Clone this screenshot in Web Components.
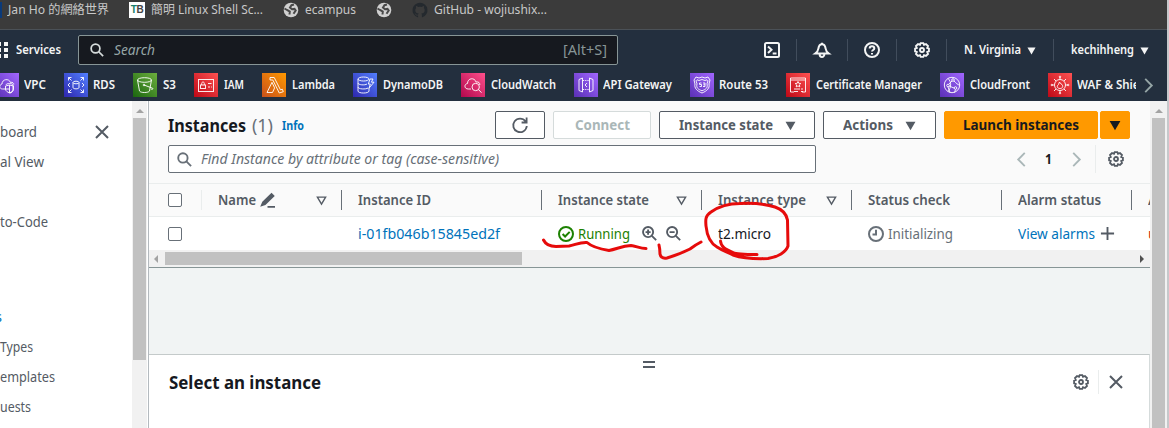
<!DOCTYPE html>
<html lang="en"><head><meta charset="utf-8"><title>Instances</title>
<style>html,body{margin:0;height:100%;overflow:hidden}</style></head>
<body><ec2-console></ec2-console>
<script>
// Base class: every element renders a template string into an open shadow root.
class Base extends HTMLElement{
  connectedCallback(){ if(this.shadowRoot) return; this.attachShadow({mode:'open'}).innerHTML='<style>*{box-sizing:border-box}svg{display:block}'+this.css()+'</style>'+this.html(); this.ready(); }
  css(){return ''} html(){return '<slot></slot>'} ready(){}
  a(n,d=''){return this.getAttribute(n)??d}
}
// Text run condensed or widened to a set advance width.
customElements.define('fit-text',class extends Base{
  css(){return `:host{display:inline-block;flex:none;white-space:pre;width:${this.a('w')}px;line-height:20px}span{display:inline-block;transform-origin:0 50%}`}
  html(){return '<span><slot></slot></span>'}
  ready(){const s=this.shadowRoot.querySelector('span');const w=s.getBoundingClientRect().width;if(w)s.style.transform=`scaleX(${+this.a('w')/w})`}
});
const gear='<path d="M6.7 1.1h2.6l.7 1.7 2-.8 2 2-.8 2 1.7.7v2.6l-1.7.7.8 2-2 2-2-.8-.7 1.7H6.7L6 13.2l-2 .8-2-2 .8-2-1.7-.7V6.7L2.8 6 2 4l2-2 2 .8z"/><circle cx="8" cy="8" r="2"/>';
const glyphs={
 gear,
 search:'<circle cx="6.3" cy="6.3" r="5"/><path d="m10 10 5 5"/>',
 bell:'<path d="M8 .8V3M1.2 11.5h13.6c-2-1.5-3-3-3.2-5C11.2 3.5 10 2.2 8 2.2S4.800 3.500 4.400 6.500c-.2 2-1.200 3.500-3.200 5zM5.600 11.700c0 4.400 4.800 4.400 4.800 0"/>',
 help:'<circle cx="8" cy="8" r="7"/><path d="M5.7 6.4c0-3 4.6-3 4.6 0 0 1.6-2.3 1.6-2.3 3.2M8 11v1.5"/>',
 shell:'<rect x="1" y="1" width="14" height="14" rx="1.5"/><path d="m4 4.5 3.5 3.3L4 11M8.7 11.5h3.8"/>',
 close:'<path d="m2 2 12 12M14 2 2 14"/>',
 refresh:'<path d="M13.5 4.3A6.8 6.8 0 1 0 14.8 9M14.6.5v5h-5"/>',
 left:'<path d="M11.5 1 4.5 8l7 7"/>', right:'<path d="m4.5 1 7 7-7 7"/>',
 down:'<path d="M.8 2.500h14.400L8 15z" fill="currentColor" stroke-width="0"/>',
 sort:'<path d="M2 3h12L8 13.2z"/>',
 edit:'<path d="m2 13 1.3-3.2L12.3 1.2 14.3 3.2 5.3 11.8zM3.500 11.500 13 2.500M8 14.8h8"/>',
 check:'<circle cx="8" cy="8" r="7"/><path d="m4.6 8 2.5 2.5 4.6-4.6"/>',
 clock:'<circle cx="8" cy="8" r="7"/><path d="M8 3.8V8.500H4.5"/>',
 zin:'<circle cx="6.5" cy="6.5" r="5.4"/><path d="m10.5 10.5 4.6 4.6M3.8 6.5h5.4M6.5 3.8v5.4"/>',
 zout:'<circle cx="6.5" cy="6.5" r="5.4"/><path d="m10.5 10.5 4.6 4.6M3.8 6.5h5.4"/>',
 plus:'<path d="M8 1v14M1 8h14"/>',
 apps:'<path d="M0 0h1v4H0zM4 0h4v4H4zM0 6h1v4H0zM4 6h4v4H4zM0 12h1v4H0zM4 12h4v4H4z" fill="currentColor" stroke="none"/>',
 globe:'<circle cx="8" cy="8" r="7.300" fill="#d0d0d0" stroke="none"/><path d="M11 2.500 8.500 3.200 7 5.500l2 1.700 2.500-.3 1.200 1.600-2.200 3.300M1.500 6.500 4 8l2.800 1.500L6.500 12.500" stroke="#484848" stroke-width="2"/>',
 git:'<path d="M8 .7a7.5 7.5 0 0 0-2.4 14.6c.4 0 .5-.2.5-.4v-1.4c-2.1.4-2.7-1-2.9-1.5l-.7-.8c1 0 1.4 1.1 1.9 1.4.6.4 1.3.2 1.7 0 .1-.5.4-.8.6-1-1.9-.2-3.4-1-3.4-3.6 0-.8.3-1.5.8-2-.1-.5-.2-1.200.1-2 0 0 .8 0 2 .9a7 7 0 0 1 3.6 0c1.200-.9 2-.9 2-.9.3.8.2 1.500.1 2 .5.5.8 1.200.8 2 0 2.600-1.600 3.400-3.400 3.600.3.3.6.8.6 1.600v1.700c0 .2.1.4.5.4A7.500 7.500 0 0 0 8 .7z" fill="#24292e" stroke="none"/>'
};
customElements.define('ui-icon',class extends Base{
  css(){return `:host{display:block;flex:none;width:${this.a('s','16')}px;height:${this.a('h',this.a('s','16'))}px}svg{width:100%;height:100%;overflow:visible}`}
  html(){return `<svg viewBox="0 0 ${this.a('n')=='apps'?8:16} 16" fill="none" stroke="currentColor" stroke-width="${this.a('k','2')}">${glyphs[this.a('n')]}</svg>`}
});
// Shortcut tiles: gradient pair and line drawing per service.
const P=['#5a30b5','#a166ff'],B=['#2e27ad','#527fff'],R=['#bd0816','#ff5252'];
const tiles={
 vpc:[P,'<path d="M14 16H7.5C4 16 4 11.5 7 11c0-5 7-6 8.5-1.5 2-.8 3.5.8 3.3 2"/><path d="m11 12c0-2 7-2 7 0v5c0 1.500-1.500 3-3 3"/><path d="m10.500 13 4-1 4 1v3c0 2-2 3-4 4-2-1-4-2-4-4zM14.500 12v8"/>'],
 rds:[B,'<ellipse cx="12" cy="9.500" rx="3" ry="1.300"/><path d="M9 9.500v5c0 1.800 6 1.800 6 0v-5M4.500 7.500v-3h3M4.500 4.500 7.500 7.500M16.500 4.500h3v3M19.500 4.500l-3 3M4.500 16.500v3h3M4.500 19.500l3-3m9 3h3v-3m0 3-3-3M6 10l-2 2 2 2m12-4 2 2-2 2"/>'],
 s3:[['#1b660f','#6cae3e'],'<ellipse cx="11.5" cy="7" rx="7" ry="2.3"/><path d="m4.5 7 2 11c1 2 9 2 10 0l2-11M11 12l8 3c2 .5.5 2-1 1"/><circle cx="11" cy="12" r=".8"/>'],
 iam:[R,'<rect x="4.500" y="6.500" width="15" height="12"/><rect x="6.5" y="12" width="5" height="3.500"/><path d="M7.7 12v-1.500c0-2 2.6-2 2.6 0V12M14 10.500h3.500M14 14h2M17 14h.8"/>'],
 lambda:[['#c8511b','#f90'],'<path d="M5 19.5 10 9.3l2.6 5.6-2.1 4.6zM8 4.5h4.2l6.3 12.4 1.8-.7 1 2.5-4 1.3L10.8 7H8z"/>'],
 dynamo:[B,'<ellipse cx="10.5" cy="6" rx="5.5" ry="2"/><path d="M5 6v12c0 2.7 11 2.7 11 0v-3M5 10c0 2 7 2.5 9 1M5 14c0 2.3 8 2.5 10 1M17 6h3l-1.6 3.2H21l-5 6 1.3-4.2h-2z"/>'],
 watch:[['#b0084d','#ff4f8b'],'<path d="M10 16H7.3C3 16 3 11 6.5 10.5 6.5 5 13.5 4 15 9c2.8-.5 4 1 3.8 3"/><circle cx="14.7" cy="14" r="3.7"/><path d="m17.5 16.5 3 3.2"/>'],
 api:[P,'<path d="M8.500 5v14L5 17.500v-11zM15.500 5v14l3.500-1.500v-11zM13 10l-2 2 2 2"/><path d="M9 7.500h6M9 16.500h6" stroke-dasharray="1.2 1"/>'],
 route:[P,'<path d="M12 4l3 1 3-1 2 3-1 4c1 4-2 7-7 9-5-2-8-5-7-9L4 7l2-3 3 1zM12 6.5l3 1 2-.7 1 1-1 3c1 4-1 5.500-5 7-4-1.500-6-3-5-7l-1-3 1-1 2 .7z"/><path d="M11.500 10H9.500v1.500h2v2h-2M13 10h2v3.500h-2m.3-1.700H15"/>'],
 cert:[R,'<path d="M8 19H4.5V5h15v14H16M5 7h14M8 16h6m-6 2.5h4M15 16h2m-2 2.5h2M12 8.5l.8 1.8 2 .2-1.4 1.4.4 2-1.8-1-1.8 1 .4-2-1.4-1.4 2-.2z"/>'],
 front:[P,'<circle cx="12" cy="12" r="7.7"/><circle cx="13" cy="7" r="1.3"/><circle cx="8" cy="12.5" r="1.3"/><circle cx="15.5" cy="15" r="1.3"/><path d="M8 5.5C12 9 11 15 8 18.5M14 8c2 2 4 4 5.5 4M9 11l3-3m-3 5 5 2m-6-1 2 5.5m5.5-3-1 3"/>'],
 waf:[R,'<circle cx="12" cy="12" r="5.500"/><path d="M12 4v2.500m0 11V20M4 12h2.500m11 0H20M6 6l2 2m8 8 2 2m0-12-2 2m-8 8-2 2M12 15.5c-3 0-3.5-2.5-1.5-4l1-2.5 1 1.5 1.5 1c1.5 2 .5 4-2 4z"/><circle cx="12" cy="3.800" r=".7"/><circle cx="12" cy="20.200" r=".7"/><circle cx="3.800" cy="12" r=".7"/><circle cx="20.200" cy="12" r=".7"/>']
};
customElements.define('service-link',class extends Base{
  css(){const g=tiles[this.a('n')][0];return `:host{display:flex;flex:none;align-items:center;gap:${this.a('g','6')}px}i{width:24px;height:24px;background:linear-gradient(45deg,${g[0]},${g[1]})}fit-text{font:600 12px "Noto Sans",sans-serif;line-height:20px;color:#f4f5f5}`}
  html(){return `<i><svg width="24" height="24" viewBox="0 0 24 24" fill="none" stroke="#fff" stroke-width="1" stroke-opacity=".9">${tiles[this.a('n')][1]}</svg></i><fit-text w="${this.a('w')}">${this.a('t')}</fit-text>`}
});
customElements.define('bookmark-bar',class extends Base{
  css(){return `:host{display:flex;height:30px;background:#3b3b3b;border-bottom:1px solid #4b5157;font:12.5px "Noto Sans","Noto Sans CJK TC",sans-serif;color:#c8c8c8;overflow:hidden}.b{display:flex;align-items:center;height:19px}fit-text{margin-left:6px}.j{width:2px;height:16px;background:#0a3a7a}.tb{width:16px;height:16px;background:#fff;color:#444;font:bold 10px/16px "Liberation Sans";text-align:center;letter-spacing:-.5px}.tb b{color:#17806d}`}
  html(){return `<div class="b"><i class="j"></i><fit-text w="101">Jan Ho 的網絡世界</fit-text></div><div class="b" style="margin-left:20px"><i class="tb"><b>T</b>B</i><fit-text w="112">簡明 Linux Shell Sc...</fit-text></div><div class="b" style="margin-left:20px"><ui-icon n="globe"></ui-icon><fit-text w="51">ecampus</fit-text></div><div class="b" style="margin-left:20px"><ui-icon n="globe"></ui-icon></div><div class="b" style="margin-left:20px"><ui-icon n="git"></ui-icon><fit-text w="113">GitHub - wojiushix...</fit-text></div>`}
});
customElements.define('top-nav',class extends Base{
  css(){return `:host{display:flex;height:40px;align-items:center;background:#232f3e;color:#f4f5f5;font:600 12px "Noto Sans",sans-serif}
   .s{display:flex;align-items:center;width:540px;height:30px;margin-left:17px;padding:0 10px 0 11px;border:1px solid #879596;border-radius:2px;background:#16191f;color:#d5dbdb;font-size:14px;font-weight:400}.s em{margin-left:10px;color:#95a5a6;flex:1}.s fit-text.k{color:#879596}
   .u{display:flex;align-items:center;justify-content:center;height:22px;border-left:1px solid #414d5c}.u:first-child{border:0}`}
  html(){return `<ui-icon n="apps" s="8" h="16"></ui-icon><fit-text w="45" style="margin-left:8px">Services</fit-text>
   <div class="s"><ui-icon n="search" s="14"></ui-icon><em><fit-text w="41">Search</fit-text></em><fit-text class="k" w="44">[Alt+S]</fit-text></div>
   <div style="display:flex;margin-left:130px"><div class="u" style="width:48px"><ui-icon n="shell"></ui-icon></div><div class="u" style="width:51px"><ui-icon n="bell"></ui-icon></div><div class="u" style="width:49px"><ui-icon n="help"></ui-icon></div><div class="u" style="width:50px"><ui-icon n="gear" k="1.9"></ui-icon></div>
   <div class="u" style="width:107px;gap:6px;padding-right:1px"><fit-text w="57">N. Virginia</fit-text><ui-icon n="down" s="9"></ui-icon></div><div class="u" style="width:113px;gap:6px;padding-right:1px"><fit-text w="63">kechihheng</fit-text><ui-icon n="down" s="9"></ui-icon></div></div>`}
});
customElements.define('favorites-bar',class extends Base{
  css(){return `:host{display:flex;height:31px;background:#232f3e;align-items:center;color:#95a5a6;padding-bottom:1px}.l{display:flex;gap:18px;width:1136px;overflow:hidden}service-link:first-child{margin-left:-5px}ui-icon{margin-left:5px}`}
  html(){return '<div class="l">'+[['vpc','VPC',22,5],['rds','RDS',22,5],['s3','S3',13],['iam','IAM',20],['lambda','Lambda',43],['dynamo','DynamoDB',60],['watch','CloudWatch',65,6],['api','API Gateway',69,5],['route','Route 53',49,5],['cert','Certificate Manager',106],['front','CloudFront',60],['waf','WAF &amp; Shield',73,5]].map(x=>`<service-link n="${x[0]}" t="${x[1]}" w="${x[2]}" g="${x[3]||6}"></service-link>`).join('')+'</div><ui-icon n="right" s="15" k="2"></ui-icon>'}
});
// Classic scrollbar, vertical.
customElements.define('v-scroll',class extends Base{
  css(){return `:host{display:flex;flex-direction:column;flex:none;width:15px;align-items:center;background:#f1f1f1}i{width:0;border:4px solid transparent;border-top:0;border-bottom:4px solid #a3a3a3;margin-top:8px}b{width:13px;height:${this.a('h')}px;background:#c1c1c1;margin-top:5px}`}
  html(){return '<i></i><b></b>'}
});
customElements.define('side-nav',class extends Base{
  css(){return `:host{display:flex;flex:none;width:149px;background:#fff;border-right:1px solid #b4babf;color:#545b64;font:14px "Noto Sans",sans-serif}nav{width:132px;overflow:hidden;padding-top:16px}div{height:30px;display:flex;align-items:center}ui-icon{margin-left:57px}.g{height:65px}v-scroll{margin-right:1px}`}
  html(){return `<nav><div><fit-text w="37">board</fit-text><ui-icon n="close"></ui-icon></div><div><fit-text w="44">al View</fit-text></div><div></div><div><fit-text w="48">to-Code</fit-text></div><div class="g"></div><div style="color:#0073bb;margin-left:-5px"><fit-text w="7">s</fit-text></div><div><fit-text w="33">Types</fit-text></div><div><fit-text w="55">emplates</fit-text></div><div><fit-text w="31">uests</fit-text></div></nav><v-scroll h="242"></v-scroll>`}
});
customElements.define('ui-button',class extends Base{
  css(){const v=this.a('v');return `:host{display:flex;flex:none;align-items:center;justify-content:center;gap:12px;width:${this.a('w')}px;height:28px;border:1px solid #545b64;border-radius:2px;background:#fff;color:#545b64;font:bold 14px "Noto Sans",sans-serif}
   ${v=='off'?':host{border-color:#d5dbdb;color:#aab7b8}':''}${v=='pri'?':host{border-color:#f90;background:#f90;color:#16191f}':''}`}
});
customElements.define('table-head',class extends Base{
  css(){return `:host{display:flex;height:34px;border-top:1px solid #eaeded;border-bottom:1px solid #eaeded;align-items:center;font-weight:600;color:#545b64;overflow:hidden}div{display:flex;flex:none;height:20px;align-items:center;justify-content:space-between;padding:0 14px 0 16px;border-right:1px solid #687078}.c{width:53px;padding:0 0 0 19px;border-color:#eaeded}i{width:14px;height:14px;border:1px solid #687078;border-radius:2px;background:#fff}span{display:flex;gap:4px;align-items:center}`}
  html(){const c=(w,t,tw,s)=>`<div style="width:${w}px"><fit-text w="${tw}">${t}</fit-text>${s?'<ui-icon n="sort" s="11"></ui-icon>':''}</div>`;
   return `<div class="c"><i></i></div><div style="width:140px"><span><fit-text w="38">Name</fit-text><ui-icon n="edit" s="15"></ui-icon></span><ui-icon n="sort" s="11"></ui-icon></div>`+c(200,'Instance ID',73)+c(160,'Instance state',91,1)+c(150,'Instance type',88,1)+c(150,'Status check',82)+c(130,'Alarm status',83)+c(160,'Availability Zone',112)}
});
customElements.define('table-row',class extends Base{
  css(){return `:host{display:flex;height:33px;background:#fff;align-items:center;overflow:hidden;color:#16191f}div{display:flex;flex:none;height:100%;align-items:center;padding-left:16px}.c{width:53px;padding:0 0 0 19px}i{width:14px;height:14px;border:1px solid #687078;border-radius:2px}.l{color:#0073bb}`}
  html(){return `<div class="c"><i></i></div><div style="width:140px"></div><div class="l" style="width:200px"><fit-text w="142">i-01fb046b15845ed2f</fit-text></div>
   <div style="width:160px;color:#1d8102"><ui-icon n="check"></ui-icon><fit-text w="52" style="margin-left:4px">Running</fit-text><ui-icon n="zin" s="15" style="color:#545b64;margin-left:12px"></ui-icon><ui-icon n="zout" s="15" style="color:#545b64;margin-left:9px"></ui-icon></div>
   <div style="width:150px"><fit-text w="53">t2.micro</fit-text></div>
   <div style="width:150px;color:#687078"><ui-icon n="clock"></ui-icon><fit-text w="65" style="margin-left:4px">Initializing</fit-text></div>
   <div class="l" style="width:130px"><fit-text w="77">View alarms</fit-text><ui-icon n="plus" s="15" style="color:#545b64;margin-left:5px"></ui-icon></div><div style="color:#d13212">us-east-1</div>`}
});
customElements.define('instance-table',class extends Base{
  css(){return `:host{display:block;flex:none;height:167px;background:#fafafa;border-bottom:1px solid #879596;font:14px "Noto Sans",sans-serif;color:#16191f}
   .t{display:flex;height:44px;padding:10px 20px 0 19px;gap:8px;align-items:flex-start}.h{flex:1;display:flex;align-items:center;height:27px}.h fit-text{font-size:18px;font-weight:700}
   .f{display:flex;height:38px;padding:0 13px 0 19px}.q{display:flex;align-items:center;width:648px;height:28px;border:1px solid #687078;border-radius:2px;background:#fff;color:#687078;padding-left:8px;gap:9px;font-style:italic}
   .p{display:flex;align-items:center;height:28px;margin-left:198px;color:#aab7b8}.p u{width:1px;height:28px;background:#eaeded;margin:0 12px 0 11px}
   .x{display:flex;height:17px;background:#f1f1f1;align-items:center}.x b{width:357px;height:13px;background:#c1c1c1}.x i{border:4px solid transparent}`}
  html(){return `<div class="t"><div class="h"><fit-text w="78">Instances</fit-text><fit-text w="21" style="color:#687078;font-weight:400;margin-left:6px">(1)</fit-text><fit-text w="22" style="font-size:12px;color:#0073bb;margin:3px 0 0 9px">Info</fit-text></div>
   <ui-button w="50"><ui-icon n="refresh" k="1.8"></ui-icon></ui-button><ui-button w="98" v="off"><fit-text w="55">Connect</fit-text></ui-button><ui-button w="156"><fit-text w="94">Instance state</fit-text><ui-icon n="down" s="11"></ui-icon></ui-button><ui-button w="113"><fit-text w="50">Actions</fit-text><ui-icon n="down" s="11"></ui-icon></ui-button><span style="display:flex;gap:2px"><ui-button w="154" v="pri"><fit-text w="116">Launch instances</fit-text></ui-button><ui-button w="30" v="pri"><ui-icon n="down" s="12"></ui-icon></ui-button></span></div>
   <div class="f"><div class="q"><ui-icon n="search" s="15"></ui-icon><fit-text w="298">Find Instance by attribute or tag (case-sensitive)</fit-text></div><div class="p"><ui-icon n="left" s="15"></ui-icon><fit-text w="7" style="color:#16191f;font-weight:700;margin:0 17px 0 16px">1</fit-text><ui-icon n="right" s="15"></ui-icon><u></u><ui-icon n="gear" k="1.8" style="color:#545b64"></ui-icon></div></div>
   <table-head></table-head><table-row></table-row>
   <div class="x"><i style="border-left:0;border-right-color:#a3a3a3;margin:0 7px 0 5px"></i><b></b><i style="border-right:0;border-left:4px solid #505050;margin-left:618px"></i></div>`}
});
customElements.define('split-panel',class extends Base{
  css(){return `:host{display:flex;flex-direction:column;flex:1;background:#fff;border-top:1px solid #c4caca;border-right:1px solid #d5dbdb;font:bold 18px "Noto Sans",sans-serif;color:#16191f}.d{width:12px;height:7px;border:solid #545b64;border-width:2px 0;margin:6px 0 0 494px}.h{display:flex;align-items:center;height:28px;padding:0 25px 0 20px;color:#545b64}fit-text{color:#16191f;margin-right:auto}u{width:1px;height:24px;background:#eaeded;margin:0 9px}`}
  html(){return `<div class="d"></div><div class="h"><fit-text w="152">Select an instance</fit-text><ui-icon n="gear" k="1.8"></ui-icon><u></u><ui-icon n="close"></ui-icon></div>`}
});
// Hand-drawn pen marks laid over the table.
customElements.define('pen-marks',class extends Base{
  css(){return ':host{position:absolute;left:0;top:0;pointer-events:none}'}
  html(){return `<svg width="1169" height="428" fill="none" stroke="#e60b0b" stroke-width="3" stroke-linecap="round" stroke-linejoin="round"><path d="M543.500 240C546 245 550 246.500 556 246.500L569 246C575 245 580 242 587 242.500 592 247 600 249 609 250.500 617 249 622 246 631 245.500 636 246 640 248.500 646 248.500M659 245Q660 249 660 254 661 259 667 258C677 255 684 252 690 249 694 246 697 244 701 242M740 203.500C729 203.500 718 207 711 212 705 216 705.500 220 706 226 707 236 710 243 717 247 723 251 728 252 733 255 742 258 755 259 768 258.500 778 257 786 252 788 246L787.500 220C786 212 781 209 775 207 765 203.500 752 203 740 203.500M720.500 241C721 247 725 249 733 252.500Q736 254.500 757 254.500"/></svg>`}
});
customElements.define('ec2-console',class extends Base{
  css(){return `:host{display:flex;position:relative;width:1169px;height:428px;background:#c6c8cb;overflow:hidden}.w{display:flex;flex-direction:column;width:1167px}.m{display:flex;flex:1;background:#f1f1f1}.c{display:flex;flex-direction:column;width:1001px;background:#f1f4f4}.gap{height:86px;flex:none}v-scroll{margin-left:1px}`}
  html(){return `<div class="w"><bookmark-bar></bookmark-bar><top-nav></top-nav><favorites-bar></favorites-bar><div class="m"><side-nav></side-nav><div class="c"><instance-table></instance-table><div class="gap"></div><split-panel></split-panel></div><v-scroll h="310"></v-scroll></div></div><pen-marks></pen-marks>`}
});
</script></body></html>
